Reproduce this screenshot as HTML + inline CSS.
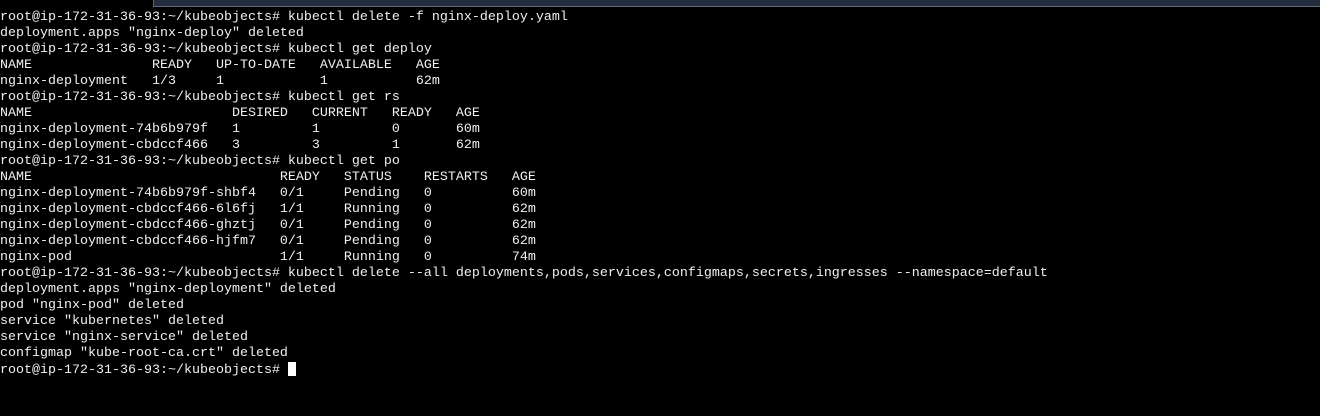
<!DOCTYPE html>
<html><head><meta charset="utf-8"><style>
html,body{margin:0;padding:0;background:#000;width:1320px;height:416px;overflow:hidden;}
.bar{position:absolute;left:153px;top:0;width:1167px;height:6px;background:#222d3d;border-left:1px solid #5a6575;border-bottom:1px solid #5f6a78;}
pre{position:absolute;left:0;top:10px;margin:0;font-family:"Liberation Mono",monospace;font-size:13.333px;line-height:16px;color:#f0f0f0;white-space:pre;}
.cur{display:inline-block;width:8px;height:14px;background:#fff;vertical-align:-3px;}
</style></head><body>
<div class="bar"></div>
<pre>root@ip-172-31-36-93:~/kubeobjects# kubectl delete -f nginx-deploy.yaml
deployment.apps "nginx-deploy" deleted
root@ip-172-31-36-93:~/kubeobjects# kubectl get deploy
NAME               READY   UP-TO-DATE   AVAILABLE   AGE
nginx-deployment   1/3     1            1           62m
root@ip-172-31-36-93:~/kubeobjects# kubectl get rs
NAME                         DESIRED   CURRENT   READY   AGE
nginx-deployment-74b6b979f   1         1         0       60m
nginx-deployment-cbdccf466   3         3         1       62m
root@ip-172-31-36-93:~/kubeobjects# kubectl get po
NAME                               READY   STATUS    RESTARTS   AGE
nginx-deployment-74b6b979f-shbf4   0/1     Pending   0          60m
nginx-deployment-cbdccf466-6l6fj   1/1     Running   0          62m
nginx-deployment-cbdccf466-ghztj   0/1     Pending   0          62m
nginx-deployment-cbdccf466-hjfm7   0/1     Pending   0          62m
nginx-pod                          1/1     Running   0          74m
root@ip-172-31-36-93:~/kubeobjects# kubectl delete --all deployments,pods,services,configmaps,secrets,ingresses --namespace=default
deployment.apps "nginx-deployment" deleted
pod "nginx-pod" deleted
service "kubernetes" deleted
service "nginx-service" deleted
configmap "kube-root-ca.crt" deleted
root@ip-172-31-36-93:~/kubeobjects# <span class="cur"></span></pre>
</body></html>
